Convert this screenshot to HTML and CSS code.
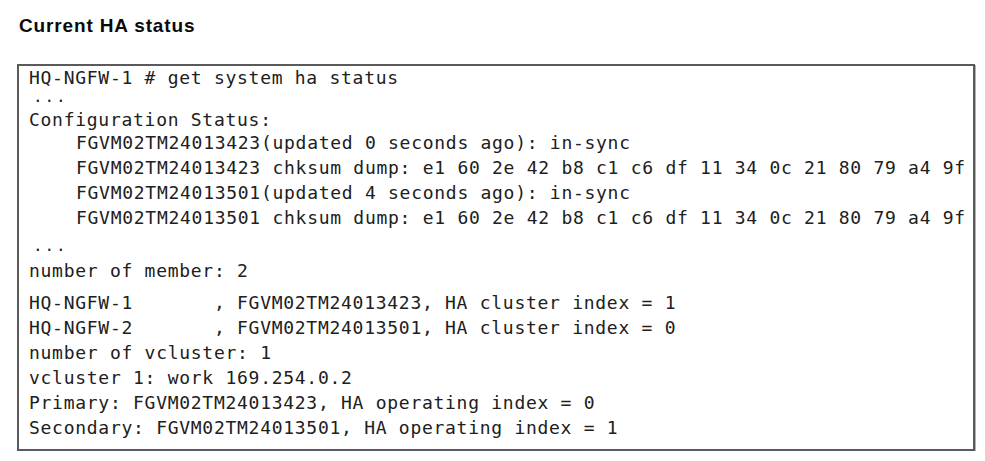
FILE: index.html
```html
<!DOCTYPE html>
<html>
<head>
<meta charset="utf-8">
<link rel="stylesheet" href="styles.css">
</head>
<body>
<div class="page">
  <div class="title">Current HA status</div>
  <div class="console">
    <div class="line short">HQ-NGFW-1 # get system ha status</div>
    <div class="line dots first-dots">...</div>
    <div class="line short after-dots">Configuration Status:</div>
    <div class="line indent">FGVM02TM24013423(updated 0 seconds ago): in-sync</div>
    <div class="line indent">FGVM02TM24013423 chksum dump: e1 60 2e 42 b8 c1 c6 df 11 34 0c 21 80 79 a4 9f</div>
    <div class="line indent">FGVM02TM24013501(updated 4 seconds ago): in-sync</div>
    <div class="line indent">FGVM02TM24013501 chksum dump: e1 60 2e 42 b8 c1 c6 df 11 34 0c 21 80 79 a4 9f</div>
    <div class="line dots second-dots">...</div>
    <div class="line">number of member: 2</div>
    <div class="line member-gap">HQ-NGFW-1       , FGVM02TM24013423, HA cluster index = 1</div>
    <div class="line">HQ-NGFW-2       , FGVM02TM24013501, HA cluster index = 0</div>
    <div class="line">number of vcluster: 1</div>
    <div class="line">vcluster 1: work 169.254.0.2</div>
    <div class="line">Primary: FGVM02TM24013423, HA operating index = 0</div>
    <div class="line">Secondary: FGVM02TM24013501, HA operating index = 1</div>
  </div>
</div>
</body>
</html>
```

FILE: styles.css
```css
html, body {
  margin: 0;
  padding: 0;
  background: #ffffff;
}

.page {
  padding: 15px 0 0 17px;
}

.title {
  font-family: "Liberation Sans", Arial, sans-serif;
  font-weight: bold;
  font-size: 19px;
  line-height: 22px;
  letter-spacing: 0.85px;
  color: #0a0a0a;
  padding-left: 2px;
  margin-bottom: 27px;
}

.console {
  box-sizing: border-box;
  width: 958px;
  border: 2px solid #5a5a5a;
  box-shadow: 1px 1px 0 #b0b0b0;
  padding: 2px 0 9px 10px;
  font-family: "DejaVu Sans Mono", monospace;
  font-size: 18px;
  letter-spacing: 0.72px;
  color: #202020;
}

.line {
  line-height: 25px;
  height: 25px;
  white-space: pre;
}

.line.short {
  line-height: 20px;
  height: 20px;
}

.indent {
  padding-left: 47px;
}

.dots {
  padding-left: 4px;
  font-size: 16px;
  letter-spacing: 1.87px;
}

.line.first-dots {
  line-height: 14px;
  height: 14px;
  margin-top: 2px;
}

.after-dots {
  margin-top: 6px;
}

.second-dots {
  margin-top: 3px;
}

.member-gap {
  margin-top: 7px;
}
```
